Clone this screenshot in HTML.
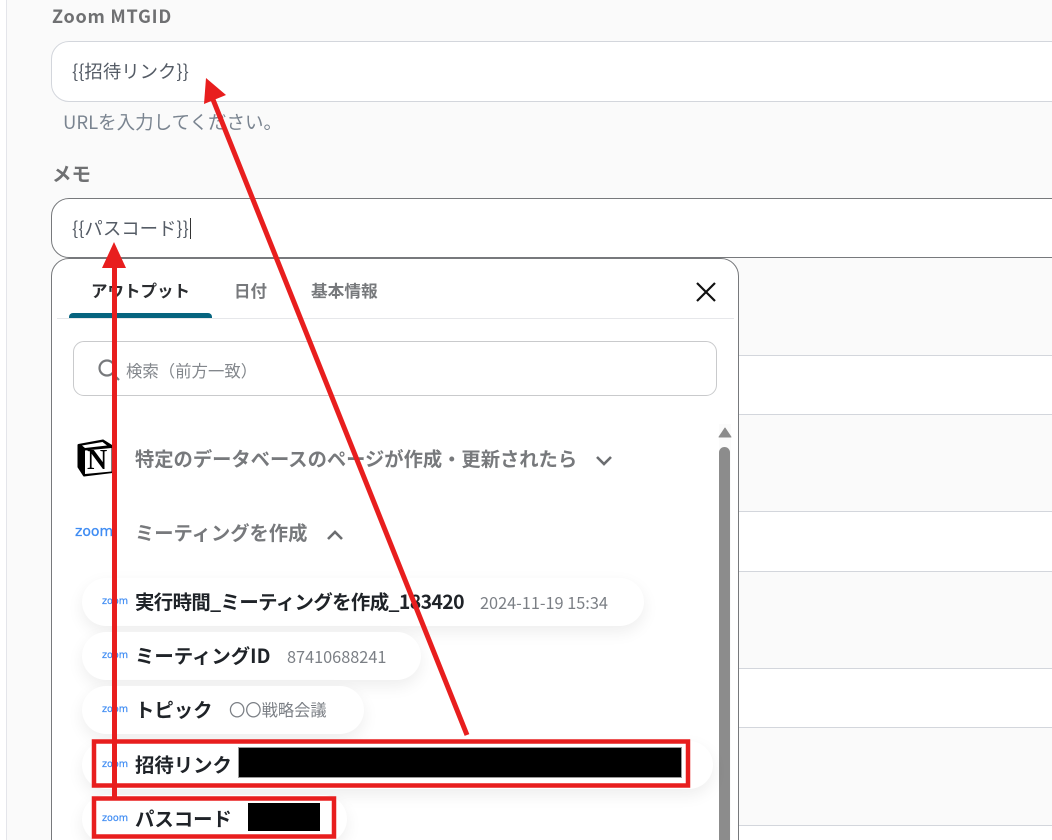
<!DOCTYPE html>
<html lang="ja"><head><meta charset="utf-8"><style>
html,body{margin:0;padding:0;width:1052px;height:840px;overflow:hidden;background:#fff}
body{position:relative;font-family:"Noto Sans CJK JP","Liberation Sans",sans-serif}
.a{position:absolute;white-space:nowrap}
.band{position:absolute;left:7px;width:1045px}
.hl{position:absolute;left:739px;width:313px;height:1px;background:#d3d6dc}
.inp{position:absolute;left:51px;width:1100px;background:#fff;box-sizing:border-box;border-radius:18px}
.pill{position:absolute;left:82px;height:48px;background:#fff;border-radius:24px;box-shadow:0 6px 16px rgba(0,0,0,.07)}
.k{position:absolute;font-size:19.400px;font-weight:700;color:#1f2328;white-space:nowrap;line-height:24px}
.v{position:absolute;font-size:16.300px;color:#7b7f85;white-space:nowrap;line-height:20px}
.z{position:absolute;left:102px;font:9.600px/12px "DejaVu Sans",sans-serif;color:#3f8cf3;-webkit-text-stroke:.2px #3f8cf3}
</style></head><body>
<div class="band" style="top:0;height:355px;background:#fafafa"></div>
<div class="band" style="top:414px;height:97px;background:#fafafa"></div>
<div class="band" style="top:571px;height:97px;background:#fafafa"></div>
<div class="band" style="top:728px;height:97px;background:#fafafa"></div>
<div class="a" style="left:7px;top:0;width:50px;height:840px;background:#fafafa"></div>
<div class="a" style="left:6px;top:0;width:1px;height:840px;background:#e4e5ea"></div>
<div class="hl" style="top:355px"></div><div class="hl" style="top:414px"></div><div class="hl" style="top:511px"></div><div class="hl" style="top:571px"></div><div class="hl" style="top:668px"></div><div class="hl" style="top:727px"></div><div class="hl" style="top:825px"></div>

<div class="a" style="left:52px;top:4px;font-size:18px;font-weight:700;color:#6f7072;line-height:24px;letter-spacing:.75px">Zoom MTGID</div>
<div class="inp" style="top:41px;height:61px;border:1px solid #d3d6dc"></div>
<div class="a" style="left:72px;top:59px;font-size:18.400px;color:#555c66;line-height:24px">{{招待リンク}}</div>
<div class="a" style="left:63px;top:110px;font-size:18.500px;color:#7a8490;line-height:24px">URLを入力してください。</div>
<div class="a" style="left:52px;top:161px;font-size:19.500px;font-weight:700;color:#6f7072;line-height:24px">メモ</div>
<div class="inp" style="top:198px;height:60px;border:1px solid #77797c"></div>
<div class="a" style="left:72px;top:216px;font-size:18.400px;color:#555c66;line-height:24px">{{パスコード}}</div>
<div class="a" style="left:190px;top:218px;width:1px;height:21px;background:#333"></div>

<div class="a" style="left:51px;top:258px;width:688px;height:620px;box-sizing:border-box;background:#fff;border:1px solid #77797c;border-radius:18px"></div>
<div class="a" style="left:91px;top:279px;font-size:16.500px;font-weight:700;color:#2b2d30;line-height:22px">アウトプット</div>
<div class="a" style="left:234px;top:279px;font-size:16.500px;font-weight:700;color:#77797c;line-height:22px">日付</div>
<div class="a" style="left:311px;top:279px;font-size:16.700px;font-weight:700;color:#77797c;line-height:22px">基本情報</div>
<div class="a" style="left:57px;top:318px;width:677px;height:1px;background:#e6e7ea"></div>
<div class="a" style="left:69px;top:313px;width:143px;height:5px;background:#06647f;border-radius:4px 4px 0 0"></div>
<svg class="a" style="left:695px;top:281px" width="22" height="22" viewBox="0 0 22 22"><path d="M2 2L20 20M20 2L2 20" stroke="#111" stroke-width="2.200" fill="none"/></svg>

<div class="a" style="left:73px;top:341px;width:644px;height:55px;box-sizing:border-box;border:1px solid #c9cacc;border-radius:11px"></div>
<svg class="a" style="left:97px;top:358px" width="24" height="24" viewBox="0 0 24 24"><circle cx="10" cy="10" r="7.500" stroke="#77797c" stroke-width="2.200" fill="none"/><path d="M15.500 15.500L22 22" stroke="#77797c" stroke-width="2.200"/></svg>
<div class="a" style="left:126px;top:359px;font-size:16.400px;color:#83878c;line-height:22px">検索（前方一致）</div>

<svg class="a" style="left:76px;top:438px" width="38" height="40" viewBox="0 0 38 40"><path d="M2.500 7L27 2.500 36.500 8.500V34L8 37.500 2.500 29Z" fill="#000" stroke="#000" stroke-width="2" stroke-linejoin="round"/><path d="M9 12.500L35.500 10V33.500L9 36Z" fill="#fff"/><path d="M6 7.500L26.500 4 31 7.500 9 10Z" fill="#fff"/></svg>
<div class="a" style="left:87px;top:446px;font:700 28px/30px 'Liberation Serif',serif;color:#000">N</div>
<div class="a" style="left:135px;top:445px;font-size:19.300px;font-weight:700;color:#77797c;line-height:26px">特定のデータベースのページが作成・更新されたら</div>
<svg class="a" style="left:595px;top:455px" width="18" height="12" viewBox="0 0 18 12"><path d="M2 2L9 9 16 2" stroke="#6b6d70" stroke-width="2.600" fill="none"/></svg>
<div class="a" style="left:75px;top:523px;font:14px/18px 'DejaVu Sans',sans-serif;color:#3f8cf3;-webkit-text-stroke:.3px #3f8cf3">zoom</div>
<div class="a" style="left:135px;top:519px;font-size:19.300px;font-weight:700;color:#77797c;line-height:26px">ミーティングを作成</div>
<svg class="a" style="left:326px;top:529px" width="18" height="12" viewBox="0 0 18 12"><path d="M2 10L9 3 16 10" stroke="#6b6d70" stroke-width="2.600" fill="none"/></svg>

<div class="a" style="left:719px;top:424px;width:12px;height:416px;background:#fbfbfb"></div>
<svg class="a" style="left:718px;top:427px" width="14" height="12" viewBox="0 0 14 12"><path d="M7 1L13 10H1Z" fill="#8c8c8c" stroke="#8c8c8c" stroke-linejoin="round"/></svg>
<div class="a" style="left:719px;top:447px;width:11px;height:400px;background:#8c8c8c;border-radius:6px 6px 0 0"></div>

<div class="pill" style="top:578px;width:562px"></div>
<div class="pill" style="top:632px;width:339px"></div>
<div class="pill" style="top:686px;width:282px"></div>
<div class="pill" style="top:741px;width:631px"></div>
<div class="pill" style="top:795px;width:265px"></div>

<div class="z" style="top:596px">zoom</div><div class="k" style="left:135px;top:589px;letter-spacing:-.6px">実行時間_ミーティングを作成_183420</div><div class="v" style="left:480px;top:592px">2024-11-19 15:34</div>
<div class="z" style="top:650px">zoom</div><div class="k" style="left:135px;top:643px">ミーティングID</div><div class="v" style="left:287px;top:646px">87410688241</div>
<div class="z" style="top:704px">zoom</div><div class="k" style="left:135px;top:697px">トピック</div><div class="v" style="left:229px;top:699px">〇〇戦略会議</div>
<div class="z" style="top:759px">zoom</div><div class="k" style="left:135px;top:752px">招待リンク</div>
<div class="a" style="left:238px;top:747px;width:444px;height:31px;background:#000;border:1px solid #999;box-sizing:border-box"></div>
<div class="z" style="top:813px">zoom</div><div class="k" style="left:135px;top:806px">パスコード</div>
<div class="a" style="left:248px;top:803px;width:72px;height:28px;background:#000"></div>

<svg class="a" style="left:0;top:0" width="1052" height="840" viewBox="0 0 1052 840">
<g fill="none" stroke="#e81e1e">
<rect x="94" y="741.500" width="594" height="44" stroke-width="4.500"/>
<rect x="94" y="798.500" width="240" height="38" stroke-width="4.500"/>
<path d="M114.500 797V262" stroke-width="5"/>
<path d="M467 735L212 97" stroke-width="5"/>
</g>
<path d="M114 242L126 268H102Z" fill="#e81e1e"/>
<path d="M206 78L226 95 204 104Z" fill="#e81e1e"/>
</svg>
</body></html>
